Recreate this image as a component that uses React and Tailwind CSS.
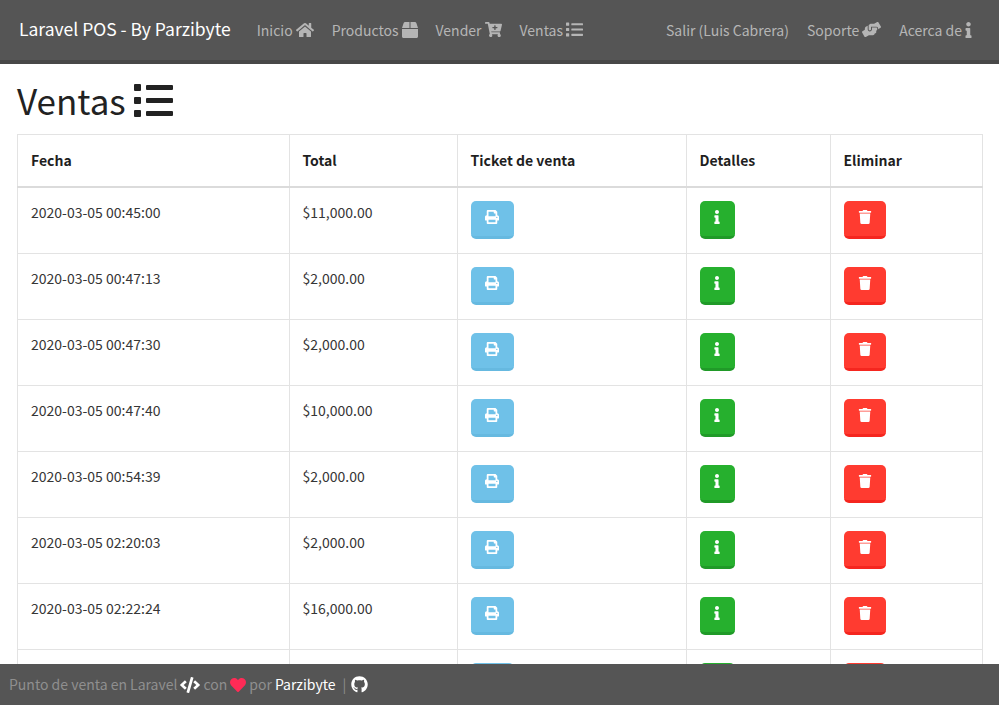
import React from "react";
import { FaHome, FaBox, FaCartPlus, FaList, FaHandsHelping, FaInfo, FaCode, FaHeart, FaGithub, FaPrint, FaTrash } from "react-icons/fa";

const rows = [
  ["2020-03-05 00:45:00", "$11,000.00"],
  ["2020-03-05 00:47:13", "$2,000.00"],
  ["2020-03-05 00:47:30", "$2,000.00"],
  ["2020-03-05 00:47:40", "$10,000.00"],
  ["2020-03-05 00:54:39", "$2,000.00"],
  ["2020-03-05 02:20:03", "$2,000.00"],
  ["2020-03-05 02:22:24", "$16,000.00"],
  ["", ""],
];

function NavLink({ label, Icon, size = 17, iconClass }) {
  return (
    <a className="flex items-center gap-[3px] text-[14px] leading-[20px] text-[#b5b5b5] whitespace-nowrap">
      <span>{label}</span>
      {Icon ? <Icon size={size} className={iconClass} /> : null}
    </a>
  );
}

function ActionButton({ Icon, w, color, edge, size = 14 }) {
  return (
    <button className={`flex items-start justify-center h-[38px] pt-[9px] rounded-[5px] border-b-[3px] text-white ${w} ${color} ${edge}`}>
      <Icon size={size} />
    </button>
  );
}

function ListGlyph() {
  return (
    <svg width="40" height="33" viewBox="0 0 40 33" fill="currentColor">
      <rect x="0" y="0" width="7" height="7" rx="1" />
      <rect x="0" y="13" width="7" height="7" rx="1" />
      <rect x="0" y="26" width="7" height="7" rx="1" />
      <rect x="12" y="1" width="27" height="5" rx="1" />
      <rect x="12" y="14" width="27" height="5" rx="1" />
      <rect x="12" y="27" width="27" height="5" rx="1" />
    </svg>
  );
}

const cell = "border border-[#e3e3e3] px-[13px] pb-[14px] align-top leading-[24px]";

export default function App() {
  return (
    <div className="h-[705px] flex flex-col overflow-hidden bg-white text-[#363636] font-['Noto_Sans_CJK_JP','Source_Sans_Pro',sans-serif]">
      <nav className="h-[64px] shrink-0 flex items-center justify-between bg-[#555555] border-b-[4px] border-[#484848] pl-[19px] pr-[27px] pb-[1px]">
        <div className="flex items-center gap-[18px]">
          <a className="text-[17.5px] text-white mr-[8px] whitespace-nowrap">Laravel POS - By Parzibyte</a>
          <NavLink label="Inicio" Icon={FaHome} size={18} />
          <NavLink label="Productos" Icon={FaBox} size={16} />
          <NavLink label="Vender" Icon={FaCartPlus} />
          <NavLink label="Ventas" Icon={FaList} />
        </div>
        <div className="flex items-center gap-[18px]">
          <NavLink label="Salir (Luis Cabrera)" />
          <NavLink label="Soporte" Icon={FaHandsHelping} size={19} />
          <NavLink label="Acerca de" Icon={FaInfo} iconClass="w-[7px] h-[16px]" />
        </div>
      </nav>

      <main className="flex-1 min-h-0 overflow-hidden px-[17px]">
        <h1 className="flex items-center gap-[8px] h-[70px] pt-[2px] text-[35px] font-normal text-[#222222] whitespace-nowrap">
          Ventas <ListGlyph />
        </h1>
        <table className="w-[965px] table-fixed border-collapse border border-[#e3e3e3] text-[14px]">
          <colgroup>
            <col className="w-[271.5px]" />
            <col className="w-[168px]" />
            <col className="w-[229px]" />
            <col className="w-[144px]" />
            <col className="w-[152.5px]" />
          </colgroup>
          <thead>
            <tr className="h-[52px]">
              {["Fecha", "Total", "Ticket de venta", "Detalles", "Eliminar"].map((h) => (
                <th key={h} className="border border-[#e3e3e3] border-b-[2px] border-b-[#dbdbdb] px-[13px] text-left font-bold text-[#1f1f1f]">{h}</th>
              ))}
            </tr>
          </thead>
          <tbody>
            {rows.map(([date, total], i) => (
              <tr key={i} className="h-[66px]">
                <td className={`${cell} pt-[12px]`}>{date}</td>
                <td className={`${cell} pt-[12px]`}>{total}</td>
                <td className={`${cell} pt-[13px]`}>
                  <ActionButton Icon={FaPrint} w="w-[43px]" color="bg-[#6fc1e8]" edge="border-[#66b9e0]" />
                </td>
                <td className={`${cell} pt-[13px]`}>
                  <ActionButton Icon={FaInfo} w="w-[35px]" color="bg-[#26b02e]" edge="border-[#209a28]" />
                </td>
                <td className={`${cell} pt-[13px]`}>
                  <ActionButton Icon={FaTrash} w="w-[42px]" color="bg-[#ff3b30]" edge="border-[#f5261f]" />
                </td>
              </tr>
            ))}
          </tbody>
        </table>
      </main>

      <footer className="h-[41px] shrink-0 flex items-center bg-[#555555] pl-[9px] text-[14px] text-[#8f8f8f] whitespace-nowrap">
        <span>Punto de venta en Laravel</span>
        <FaCode size={20} className="text-white ml-[3px] mr-[3px]" />
        <span>con</span>
        <FaHeart size={16} className="text-[#ff2b56] mx-[3px]" />
        <span>por</span>
        <a className="text-white ml-[3px]">Parzibyte</a>
        <span className="ml-[7px] mr-[5px]">|</span>
        <FaGithub size={17} className="text-white" />
      </footer>
    </div>
  );
}
